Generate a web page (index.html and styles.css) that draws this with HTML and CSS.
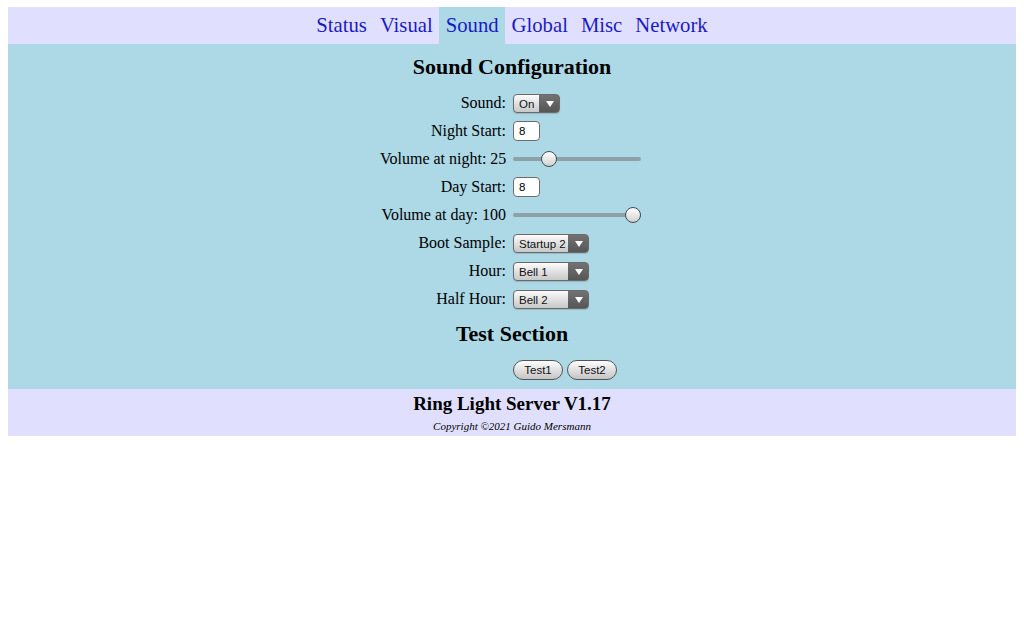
FILE: index.html
```html
<!DOCTYPE html>
<html>
<head>
<meta charset="utf-8">
<title>Ring Light Server</title>
<link rel="stylesheet" href="styles.css">
</head>
<body>
<nav class="nav">
  <a class="tab" href="#">Status</a>
  <a class="tab" href="#">Visual</a>
  <a class="tab active" href="#">Sound</a>
  <a class="tab" href="#">Global</a>
  <a class="tab" href="#">Misc</a>
  <a class="tab" href="#">Network</a>
</nav>
<main class="main">
  <h2 class="heading">Sound Configuration</h2>
  <div class="form">
    <label class="lbl">Sound:</label>
    <div class="ctl"><span class="sel sel-short"><select><option>On</option><option>Off</option></select></span></div>

    <label class="lbl">Night Start:</label>
    <div class="ctl"><input class="num" type="text" value="8"></div>

    <label class="lbl">Volume at night: 25</label>
    <div class="ctl"><input class="range" type="range" min="0" max="100" value="25"></div>

    <label class="lbl">Day Start:</label>
    <div class="ctl"><input class="num" type="text" value="8"></div>

    <label class="lbl">Volume at day: 100</label>
    <div class="ctl"><input class="range" type="range" min="0" max="100" value="100"></div>

    <label class="lbl">Boot Sample:</label>
    <div class="ctl"><span class="sel"><select><option>Startup 2</option></select></span></div>

    <label class="lbl">Hour:</label>
    <div class="ctl"><span class="sel"><select><option>Bell 1</option></select></span></div>

    <label class="lbl">Half Hour:</label>
    <div class="ctl"><span class="sel"><select><option>Bell 2</option></select></span></div>
  </div>
  <h2 class="heading heading-test">Test Section</h2>
  <div class="form">
    <span class="lbl"></span>
    <div class="ctl buttons"><button class="btn">Test1</button><button class="btn">Test2</button></div>
  </div>
</main>
<footer class="footer">
  <div class="title">Ring Light Server V1.17</div>
  <div class="copy">Copyright ©2021 Guido Mersmann</div>
</footer>
</body>
</html>
```

FILE: styles.css
```css
body {
  margin: 7px 8px 8px;
  font-family: "Liberation Serif", "Times New Roman", serif;
  color: #000;
  background: #fff;
}

.nav {
  background: #e0e0fe;
  height: 37px;
  display: flex;
  justify-content: center;
  align-items: stretch;
}

.tab {
  font-size: 20.7px;
  line-height: 37px;
  padding: 0 6.5px;
  color: #1a1ac4;
  text-decoration: none;
}

.tab.active {
  background: #add8e6;
}

.main {
  background: #add8e6;
  padding: 10px 0 5px;
}

.heading {
  margin: 0;
  text-align: center;
  font-size: 22px;
  line-height: 26px;
  font-weight: bold;
}

.heading-test {
  margin-top: 8px;
}

.form {
  display: grid;
  grid-template-columns: 126px 131px;
  column-gap: 7px;
  justify-content: center;
  grid-auto-rows: 28px;
  margin-top: 9px;
}

.lbl {
  font-size: 16px;
  text-align: right;
  white-space: nowrap;
  align-self: center;
}

.ctl {
  display: flex;
  align-items: center;
}

.sel {
  position: relative;
  display: inline-block;
  width: 76px;
  height: 19px;
}

.sel-short {
  width: 47px;
}

.sel select {
  -webkit-appearance: none;
  appearance: none;
  width: 100%;
  height: 19px;
  margin: 0;
  padding: 0 0 0 5px;
  border: 1px solid #6a6a6a;
  border-radius: 4px;
  font-family: "Liberation Sans", Arial, sans-serif;
  font-size: 11.5px;
  color: #111;
  background:
    linear-gradient(#727272, #565656) right / 20px 100% no-repeat,
    linear-gradient(#fcfcfc, #dcdcdc 60%, #c8c8c8);
  box-shadow: 0 1px 1px rgba(0,0,0,0.15);
}

.sel::after {
  content: "";
  position: absolute;
  right: 6px;
  top: 7px;
  border-left: 4px solid transparent;
  border-right: 4px solid transparent;
  border-top: 6px solid #fff;
  pointer-events: none;
}

.num {
  width: 27px;
  height: 20px;
  box-sizing: border-box;
  margin: 0;
  padding: 0 0 0 5px;
  border: 1px solid #6c6c6c;
  border-radius: 4px;
  background: #fff;
  font-family: "Liberation Sans", Arial, sans-serif;
  font-size: 11.5px;
  color: #000;
}

.range {
  -webkit-appearance: none;
  appearance: none;
  width: 128px;
  height: 18px;
  margin: 0;
  padding: 0;
  background: transparent;
}

.range::-webkit-slider-runnable-track {
  height: 4px;
  border-radius: 2px;
  background: #8fa1a8;
}

.range::-webkit-slider-thumb {
  -webkit-appearance: none;
  appearance: none;
  width: 16px;
  height: 16px;
  margin-top: -6px;
  border-radius: 50%;
  border: 1px solid #3e4c52;
  box-sizing: border-box;
  background: linear-gradient(#ffffff, #e4e4e4 60%, #cfcfcf);
}

.buttons {
  gap: 4px;
}

.btn {
  height: 20px;
  margin: 0;
  padding: 0 10px;
  border: 1px solid #555;
  border-radius: 10px;
  font-family: "Liberation Sans", Arial, sans-serif;
  font-size: 11.5px;
  color: #111;
  background: linear-gradient(#fdfdfd, #dedede 55%, #c4c4c4);
  min-width: 50px;
}

.footer {
  background: #e0e0fe;
  text-align: center;
  padding: 3px 0 3px;
}

.title {
  font-size: 19px;
  line-height: 24px;
  font-weight: bold;
}

.copy {
  margin-top: 3px;
  font-size: 11px;
  line-height: 14px;
  font-style: italic;
}
```
